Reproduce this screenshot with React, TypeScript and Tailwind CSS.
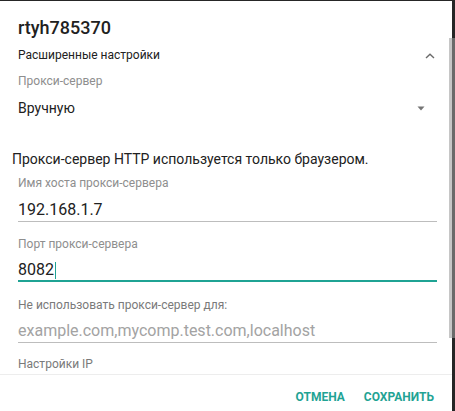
import React from "react";

export default function App() {
  return (
    <div
      className="relative w-[455px] h-[411px] bg-[#262626] overflow-hidden"
      style={{ fontFamily: "Roboto, 'Noto Sans', sans-serif" }}
    >
      <div className="absolute left-0 top-[1px] w-[452px] h-[410px] bg-white flex flex-col">
        {/* scroll area */}
        <div className="h-[373px] overflow-hidden flex flex-col">
          <div className="mt-[15px] h-[24px] leading-[24px] px-[18px] text-[18px] font-medium text-[#212121]">
            rtyh785370
          </div>
          <div className="mt-[6px] h-[19px] leading-[19px] pl-[18px] pr-[17px] flex items-center justify-between text-[12px] text-[#212121]">
            <span>Расширенные настройки</span>
            <svg width="10" height="6" viewBox="0 0 10 6">
              <path d="M1 5 L5 1.2 L9 5" fill="none" stroke="#6b6b6b" strokeWidth="1.4" />
            </svg>
          </div>
          <div className="mt-[6px] h-[21px] leading-[21px] px-[18px] text-[12px] text-[#8e8e8e]">
            Прокси-сервер
          </div>
          <div className="mt-[4px] h-[24px] leading-[24px] pl-[18px] pr-[27px] flex items-center justify-between text-[14px] text-[#212121]">
            <span>Вручную</span>
            <svg width="8" height="5" viewBox="0 0 8 5">
              <path d="M0.5 0.5 L7.5 0.5 L4 4.5 Z" fill="#757575" />
            </svg>
          </div>
          <div className="mt-[27px] h-[24px] leading-[24px] pl-[12px] text-[14px] text-[#212121]">
            Прокси-сервер HTTP используется только браузером.
          </div>
          <div className="mx-[18px] w-[419px] flex flex-col">
            <div className="mt-[2px] h-[20px] leading-[20px] text-[12px] text-[#8e8e8e]">
              Имя хоста прокси-сервера
            </div>
            <div className="mt-[5px] h-[24px] leading-[23px] text-[16px] text-[#212121] border-b border-[#bdbdbd]">
              192.168.1.7
            </div>
            <div className="mt-[12px] h-[20px] leading-[20px] text-[12px] text-[#8e8e8e]">
              Порт прокси-сервера
            </div>
            <div className="mt-[6px] h-[22px] leading-[20px] text-[16px] text-[#212121] border-b-2 border-[#1fa394] flex items-center">
              <span>8082</span>
              <span className="inline-block w-[1.5px] h-[17px] bg-[#1fa394] ml-[1px]"></span>
            </div>
            <div className="mt-[13px] h-[20px] leading-[20px] text-[12px] text-[#7a7a7a]">
              Не использовать прокси-сервер для:
            </div>
            <div className="mt-[5px] h-[23px] leading-[22px] text-[16px] text-[#a3a3a3] border-b border-[#bdbdbd]">
              example.com,mycomp.test.com,localhost
            </div>
            <div className="mt-[11px] h-[20px] leading-[20px] text-[12px] text-[#7a7a7a]">
              Настройки IP
            </div>
          </div>
        </div>
        {/* footer */}
        <div className="border-t border-[#ededed] flex-1 flex justify-end items-start pt-[12px] pr-[18px] gap-[19px]">
          <button className="h-[20px] leading-[20px] text-[12px] font-bold text-[#1fa394]">
            ОТМЕНА
          </button>
          <button className="h-[20px] leading-[20px] text-[12px] font-bold text-[#1fa394]">
            СОХРАНИТЬ
          </button>
        </div>
      </div>
      {/* scrollbar thumb */}
      <div className="absolute left-[449px] top-[38px] w-[3px] h-[300px] bg-[#c6c6c6]"></div>
      <div className="absolute left-[452px] top-[38px] w-[3px] h-[300px] bg-[#6a6a6a]"></div>
    </div>
  );
}
